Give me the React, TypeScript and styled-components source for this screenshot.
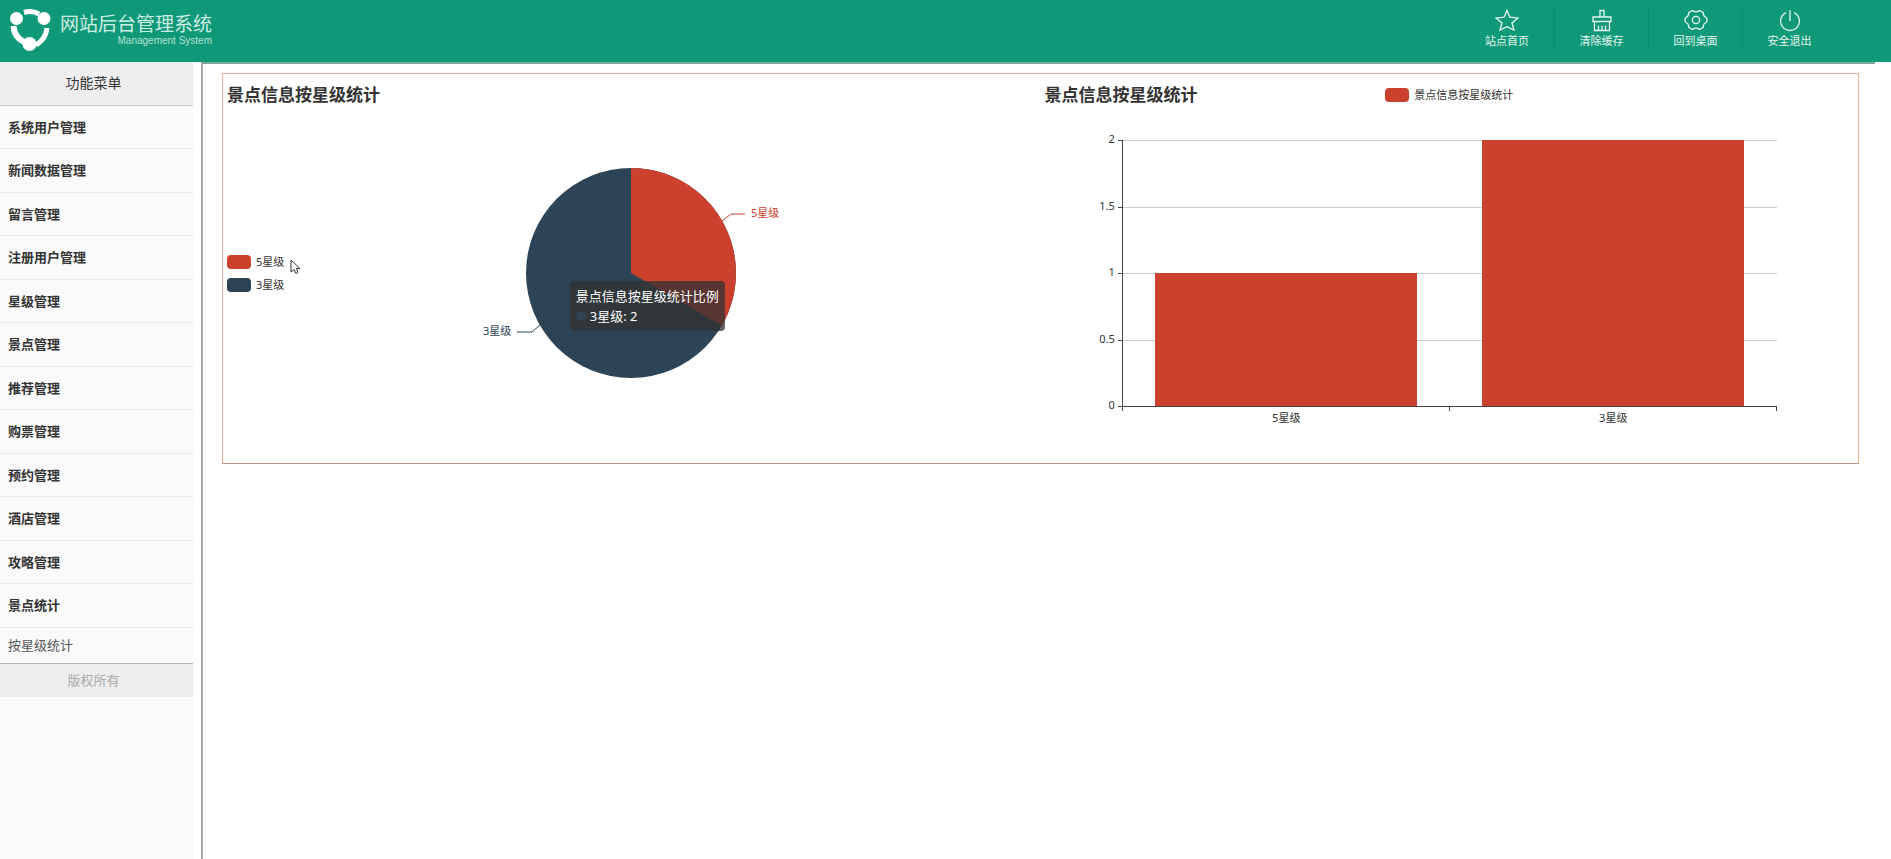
import React from "react";
import styled, { createGlobalStyle } from "styled-components";

const RED = "#cc412e";
const NAVY = "#2d4456";

const GlobalStyle = createGlobalStyle`
  * { box-sizing: border-box; }
  body {
    margin: 0;
    background: #fff;
    color: #333;
    font-family: "Noto Sans", "Noto Sans CJK SC", sans-serif;
    font-size: 13px;
  }
`;

const Page = styled.div`
  min-height: 100vh;
  display: flex;
  flex-direction: column;
`;

const Header = styled.header`
  display: flex;
  justify-content: space-between;
  height: 62px;
  padding: 8px 55px 0 9px;
  background: #109979;
  color: #e6f7f1;
`;

const Brand = styled.div`
  display: flex;
  gap: 8px;
`;

const BrandText = styled.div`
  display: flex;
  flex-direction: column;
  align-items: flex-end;
  padding-top: 4px;
`;

const BrandName = styled.h1`
  margin: 0;
  font-size: 19px;
  font-weight: 400;
  line-height: 24px;
  color: #cdeee3;
`;

const BrandSub = styled.span`
  font-family: "Liberation Sans", sans-serif;
  font-size: 10px;
  line-height: 10px;
  color: #b4e0d3;
`;

const TopNav = styled.nav`
  display: flex;
  height: 42px;
`;

const TopLink = styled.a`
  width: 94px;
  display: flex;
  flex-direction: column;
  align-items: center;
  color: inherit;
  font-size: 11px;
  line-height: 18px;
  text-decoration: none;
  & + & {
    border-left: 1px solid #0d8b6d;
  }
`;

const Icon = styled.svg`
  flex: none;
  width: 24px;
  height: 24px;
  fill: none;
  stroke: currentColor;
  stroke-width: 1.3;
`;

const Body = styled.div`
  flex: 1;
  display: flex;
`;

const Sidebar = styled.aside`
  width: 193px;
  margin-right: 8px;
  flex: none;
  background: #fafafa;
`;

const MenuTitle = styled.h2`
  margin: 0;
  height: 44px;
  padding-right: 6px;
  background: #eee;
  border-bottom: 1px solid #c8c8c8;
  font-size: 14px;
  font-weight: 400;
  line-height: 42px;
  text-align: center;
`;

const MenuList = styled.ul`
  margin: 0;
  padding: 0;
  list-style: none;
`;

const MenuItem = styled.li`
  height: 43px;
  border-bottom: 1px solid #e8e8e8;
  &:nth-child(even) {
    height: 44px;
  }
`;

const MenuLink = styled.a`
  display: block;
  padding-left: 8px;
  color: #333;
  font-weight: 700;
  line-height: 42px;
  text-decoration: none;
`;

const SubLink = styled(MenuLink)`
  color: #555;
  font-weight: 400;
  line-height: 35px;
`;

const Copyright = styled.footer`
  height: 34px;
  padding-right: 6px;
  background: #eee;
  border-top: 1px solid #b4b4b4;
  color: #aaa;
  line-height: 32px;
  text-align: center;
`;

const Main = styled.main`
  flex: 1;
  margin-right: 16px;
  padding: 9px 16px 0 19px;
  border-top: 2px solid #7fa79b;
  border-left: 2px solid #a8a8a8;
`;

const Panel = styled.section`
  display: flex;
  border: 1px solid #f0b391;
  border-bottom-color: #c09377;
`;

const Chart = styled.div`
  flex: 1;
  min-width: 0;
`;

const ChartHead = styled.div`
  display: grid;
  grid-template-columns: 1fr auto 1fr;
  padding: 0 4px;
  line-height: 42px;
`;

const ChartTitle = styled.h3`
  margin: 0;
  font-size: 17px;
  font-weight: 700;
`;

const PieBody = styled.div`
  display: grid;
  grid-template-columns: 1fr auto 1fr;
  align-items: center;
  height: 314px;
  margin-bottom: 33px;
`;

const Legend = styled.ul`
  margin: 0;
  padding: 0 0 0 4px;
  list-style: none;
  display: flex;
  flex-direction: column;
  gap: 7px;
`;

const LegendItem = styled.li`
  position: relative;
  display: flex;
  align-items: center;
  gap: 5px;
  font-size: 11px;
  line-height: 16px;
`;

const Swatch = styled.span<{ $color: string }>`
  width: 24px;
  height: 14px;
  border-radius: 4px;
  background: ${(p) => p.$color};
`;

const Pointer = styled.svg`
  position: absolute;
  left: 63px;
  top: 5px;
  width: 12px;
  height: 16px;
`;

const HeadLegend = styled.div`
  display: flex;
  align-items: center;
  gap: 5px;
  font-size: 11px;
  line-height: 40px;
`;

const PieBox = styled.div`
  position: relative;
`;

const PieSvg = styled.svg`
  display: block;
  width: 320px;
  height: 212px;
  font-size: 11px;
`;

const Tooltip = styled.div`
  position: absolute;
  left: 98px;
  top: 114px;
  padding: 5px 6px;
  border-radius: 4px;
  background: rgba(50, 50, 50, 0.75);
  color: #fff;
  line-height: 20px;
  white-space: nowrap;
`;

const TooltipRow = styled.div`
  display: flex;
  align-items: center;
  gap: 4px;
`;

const Dot = styled.span`
  width: 10px;
  height: 10px;
  border-radius: 50%;
  background: #2f4554;
`;

const BarSvg = styled.svg`
  display: block;
  width: 100%;
  height: 347px;
  font-size: 11px;
  fill: #333;
`;

const menu = [
  "系统用户管理", "新闻数据管理", "留言管理", "注册用户管理", "星级管理", "景点管理",
  "推荐管理", "购票管理", "预约管理", "酒店管理", "攻略管理", "景点统计",
];

const gearPath =
  "M8.5 2.5 Q10 3.8 12 3.8 Q14 3.8 15.5 2.5 L19.2 4.6 Q19.2 8.5 22.8 10 V14 Q19.2 15.5 19.2 19.4 L15.5 21.5 Q14 20.2 12 20.2 Q10 20.2 8.5 21.5 L4.8 19.4 Q4.8 15.5 1.2 14 V10 Q4.8 8.5 4.8 4.6 Z";

const topLinks = [
  { label: "站点首页", icon: <path d="M12 2.5 L14.9 9.2 L23 10 L17 15 L19 22 L12 18.6 L5 22 L7 15 L1 10 L9.1 9.2 Z" /> },
  { label: "清除缓存", icon: <path d="M10 9 V2.5 H14 V9 M3 13.5 V9 H21 V13.5 Z M4.5 13.5 V22.5 H19.5 V13.5 M8.5 17.5 V22 M12 17.5 V22 M15.5 17.5 V22" /> },
  { label: "回到桌面", icon: <><path d={gearPath} strokeLinejoin="round" /><circle cx="12" cy="12" r="3.6" /></> },
  { label: "安全退出", icon: <path d="M12 2 V13 M8 4.6 A9.4 9.4 0 1 0 16 4.6" /> },
];

const ticks = [
  { label: "2", y: 24 },
  { label: "1.5", y: 91 },
  { label: "1", y: 157 },
  { label: "0.5", y: 224 },
];

const bars = [
  { label: "5星级", x: "14%", mid: "30%", y: 157 },
  { label: "3星级", x: "54%", mid: "70%", y: 24 },
];

const BASE = 290;

function Logo() {
  return (
    <svg width="43" height="44" viewBox="0 0 43 44" aria-hidden="true">
      <g fill="none" stroke="#fff" strokeWidth="5">
        <path d="M15 4.5 Q23 2 30 6" />
        <path d="M4.5 18 Q5 29 15 34" strokeWidth="6" />
        <path d="M38 20 Q37 31 27 37" />
      </g>
      <circle cx="7.5" cy="10.5" r="6.5" fill="#fff" />
      <circle cx="35" cy="10.5" r="6.5" fill="#fff" />
      <circle cx="20.5" cy="36" r="7" fill="#fff" />
    </svg>
  );
}

function PieChart() {
  return (
    <PieBox>
      <PieSvg role="img" aria-label="景点信息按星级统计比例">
        <circle cx="159" cy="106" r="105" fill={NAVY} />
        <path d="M159 106 V1 A105 105 0 0 1 249.9 158.5 Z" fill={RED} />
        <path d="M250 54 L259 47 H273" fill="none" stroke={RED} />
        <text x="279" y="50" fill={RED}>5星级</text>
        <path d="M68 158 L60 165 H45" fill="none" stroke={NAVY} />
        <text x="11" y="168" fill={NAVY}>3星级</text>
      </PieSvg>
      <Tooltip>
        <div>景点信息按星级统计比例</div>
        <TooltipRow>
          <Dot />
          3星级: 2
        </TooltipRow>
      </Tooltip>
    </PieBox>
  );
}

function BarChart() {
  return (
    <BarSvg role="img" aria-label="景点信息按星级统计" shapeRendering="crispEdges">
      {ticks.map((t) => (
        <line key={t.label} x1="10%" x2="90%" y1={t.y} y2={t.y} stroke="#ccc" />
      ))}
      {bars.map((b) => (
        <rect key={b.label} x={b.x} y={b.y} width="32%" height={BASE - b.y} fill={RED} />
      ))}
      <line x1="10%" x2="10%" y1="24" y2={BASE} stroke="#444" />
      <line x1="10%" x2="90%" y1={BASE} y2={BASE} stroke="#444" />
      {["10%", "50%", "90%"].map((x) => (
        <line key={x} x1={x} x2={x} y1={BASE} y2={BASE + 5} stroke="#444" />
      ))}
      {[...ticks, { label: "0", y: BASE }].map((t) => (
        <svg key={t.label} x="10%" y={t.y} overflow="visible">
          <line x1="-5" x2="0" y1="0" y2="0" stroke="#444" />
          <text x="-8" y="3" textAnchor="end">{t.label}</text>
        </svg>
      ))}
      {bars.map((b) => (
        <text key={b.label} x={b.mid} y={BASE + 16} textAnchor="middle">{b.label}</text>
      ))}
    </BarSvg>
  );
}

export default function App() {
  return (
    <Page>
      <GlobalStyle />
      <Header>
        <Brand>
          <Logo />
          <BrandText>
            <BrandName>网站后台管理系统</BrandName>
            <BrandSub>Management System</BrandSub>
          </BrandText>
        </Brand>
        <TopNav>
          {topLinks.map((l) => (
            <TopLink key={l.label} href="#">
              <Icon viewBox="0 0 24 24" aria-hidden="true">{l.icon}</Icon>
              {l.label}
            </TopLink>
          ))}
        </TopNav>
      </Header>
      <Body>
        <Sidebar>
          <MenuTitle>功能菜单</MenuTitle>
          <MenuList>
            {menu.map((m) => (
              <MenuItem key={m}>
                <MenuLink href="#">{m}</MenuLink>
              </MenuItem>
            ))}
          </MenuList>
          <SubLink href="#">按星级统计</SubLink>
          <Copyright>版权所有</Copyright>
        </Sidebar>
        <Main>
          <Panel>
            <Chart>
              <ChartHead>
                <ChartTitle>景点信息按星级统计</ChartTitle>
              </ChartHead>
              <PieBody>
                <Legend>
                  <LegendItem>
                    <Swatch $color={RED} />
                    5星级
                    <Pointer viewBox="0 0 12 16" aria-hidden="true">
                      <path d="M1 1 V13 L4 10.5 L6 14.5 L8 13.5 L6.5 9.5 H10 Z" fill="#fff" stroke="#333" />
                    </Pointer>
                  </LegendItem>
                  <LegendItem>
                    <Swatch $color={NAVY} />
                    3星级
                  </LegendItem>
                </Legend>
                <PieChart />
              </PieBody>
            </Chart>
            <Chart>
              <ChartHead>
                <ChartTitle>景点信息按星级统计</ChartTitle>
                <HeadLegend>
                  <Swatch $color={RED} />
                  景点信息按星级统计
                </HeadLegend>
              </ChartHead>
              <BarChart />
            </Chart>
          </Panel>
        </Main>
      </Body>
    </Page>
  );
}
